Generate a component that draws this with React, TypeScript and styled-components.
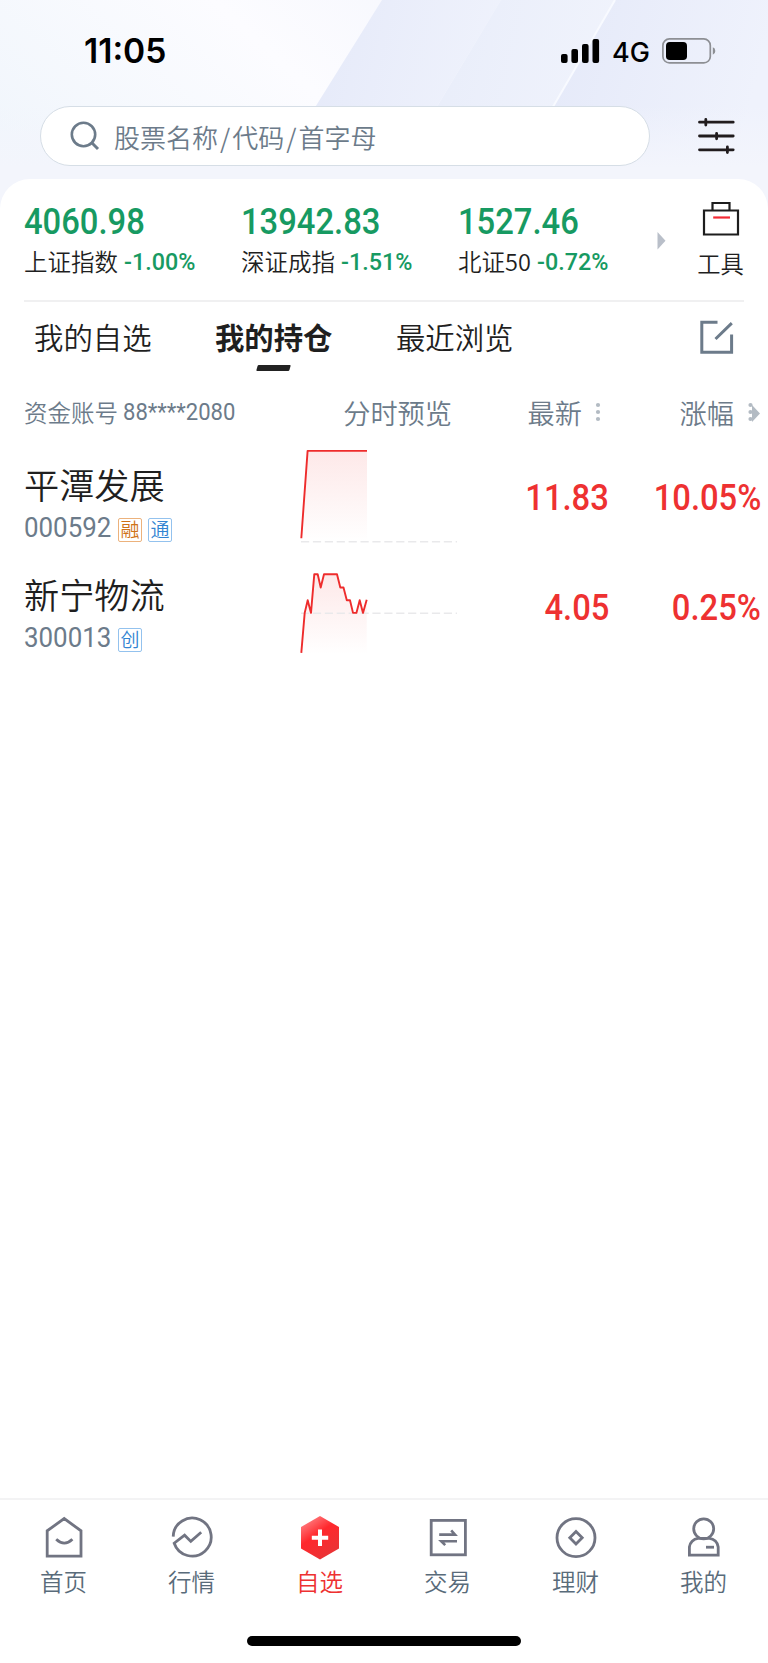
import React from "react";
import styled, { createGlobalStyle } from "styled-components";

const GlobalStyle = createGlobalStyle`
  * { box-sizing: border-box; }
  body { margin: 0; background: #fff; }
`;

const CJK = `"Noto Sans CJK SC", sans-serif`;
const SLATE = "#6c7b8a";
const INK = "#1f1f1f";
const RED = "#ee3131";
const GREEN = "#179a62";

const Screen = styled.div`
  width: 768px;
  height: 1663px;
  display: flex;
  flex-direction: column;
  overflow: hidden;
  background: #fff;
  font-family: ${CJK};
  font-weight: 350;
  color: ${INK};
  white-space: nowrap;
`;

const Header = styled.header`
  position: relative;
  height: 210px;
  flex: none;
  background: #f4f7fd;
`;

const Backdrop = styled.svg`
  position: absolute;
  inset: 0;
`;

const StatusBar = styled.div`
  position: relative;
  height: 106px;
  padding: 0 52px 0 84px;
  display: flex;
  align-items: center;
  justify-content: space-between;
  color: #000;
`;

const Clock = styled.span`
  font: 600 33.6px/40px Inter, sans-serif;
  padding-bottom: 4px;
`;

const StatusRight = styled.div`
  display: flex;
  align-items: center;
  padding-bottom: 4px;
`;

const Network = styled.span`
  font: 450 27px/40px Inter, sans-serif;
  width: 62px;
  padding-left: 12px;
  padding-top: 3px;
`;

const SearchRow = styled.div`
  position: relative;
  display: flex;
  align-items: center;
  justify-content: space-between;
  padding: 0 33px 0 40px;
`;

const SearchBox = styled.div`
  width: 610px;
  height: 60px;
  border: 1.5px solid #d6dee6;
  border-radius: 30px;
  background: #fff;
  display: flex;
  align-items: center;
  padding-left: 28px;
  gap: 13px;
  font-size: 26px;
  line-height: 55px;
  color: ${SLATE};
  i { font-style: normal; margin: 0 2px; }
`;

const Card = styled.main`
  position: relative;
  flex: 1;
  margin-top: -31px;
  border-radius: 30px 30px 0 0;
  background: #fff;
  display: flex;
  flex-direction: column;
`;

const Indices = styled.section`
  height: 123px;
  margin: 0 24px;
  border-bottom: 2px solid #f0f0f1;
  display: flex;
  padding-top: 22px;
`;

const IndexItem = styled.div`
  width: 217px;
`;

const Num = styled.span<{ $size: number; $weight?: number; $stretch?: number; $origin?: string }>`
  display: inline-block;
  font-family: Roboto, ${CJK};
  font-size: ${(p) => p.$size}px;
  font-weight: ${(p) => p.$weight ?? 500};
  transform: scaleX(${(p) => p.$stretch ?? 0.91});
  transform-origin: ${(p) => p.$origin ?? "left"} center;
`;

const IndexValue = styled.div`
  height: 40px;
  line-height: 42px;
  color: ${GREEN};
`;

const IndexLabel = styled.div`
  display: flex;
  align-items: center;
  gap: 6px;
  height: 40px;
  line-height: 40px;
  font-size: 23.5px;
  ${Num} { color: ${GREEN}; padding-top: 2px; }
`;

const MoreArrow = styled.div`
  width: 23px;
  padding-top: 30px;
  margin-left: -18px;
`;

const Tools = styled.div`
  margin-left: auto;
  width: 47px;
  display: flex;
  flex-direction: column;
  align-items: center;
  font-size: 23.3px;
  line-height: 36px;
  gap: 8px;
  svg { flex: none; }
`;

const Tabs = styled.nav`
  height: 82px;
  padding: 0 34px;
  display: flex;
  gap: 63.4px;
`;

const Tab = styled.div<{ $active?: boolean }>`
  height: 69px;
  padding-top: 14px;
  font-size: 29.4px;
  line-height: 40px;
  font-weight: ${(p) => (p.$active ? 700 : 350)};
  display: flex;
  flex-direction: column;
  align-items: center;
  justify-content: space-between;
  &::after {
    content: "";
    display: ${(p) => (p.$active ? "block" : "none")};
    width: 33px;
    height: 6px;
    background: #222;
    transform: skewX(-16deg);
    border-radius: 1px;
  }
`;

const EditIcon = styled.svg`
  margin: 17px 0 0 auto;
`;

const gridColumns = `
  display: grid;
  grid-template-columns: 276px 182px 151px 152px;
`;

const TableHead = styled.div`
  ${gridColumns}
  height: 60px;
  line-height: 56px;
  font-size: 27.2px;
  color: ${SLATE};
`;

const Account = styled.div`
  padding-left: 24px;
  font-size: 23.5px;
  display: flex;
  gap: 5px;
`;

const HeadCell = styled.div<{ $gap?: number; $right?: number }>`
  display: flex;
  justify-content: flex-end;
  align-items: center;
  height: 56px;
  gap: ${(p) => p.$gap ?? 0}px;
  padding-right: ${(p) => p.$right ?? 0}px;
`;

const StockRow = styled.div`
  ${gridColumns}
  height: 110px;
`;

const StockInfo = styled.div`
  padding: 16px 0 0 24px;
`;

const StockName = styled.div`
  font-size: 35.2px;
  line-height: 48px;
`;

const StockCode = styled.div`
  display: flex;
  align-items: center;
  height: 42px;
  color: ${SLATE};
`;

const CodeText = styled.div`
  width: 94px;
  line-height: 42px;
`;

const Tag = styled.span<{ $tone: "orange" | "blue" }>`
  width: 24px;
  height: 24px;
  margin: 1px 6px 0 0;
  border: 1.5px solid ${(p) => (p.$tone === "orange" ? "#ecb27c" : "#93c2ee")};
  border-radius: 2px;
  color: ${(p) => (p.$tone === "orange" ? "#cf7218" : "#3284d2")};
  font-size: 19px;
  line-height: 20px;
  display: flex;
  justify-content: center;
`;

const Quote = styled.div`
  height: 109px;
  line-height: 109px;
  text-align: right;
  color: ${RED};
`;

const ChartCell = styled.div`
  padding-left: 24px;
  svg { display: block; }
`;

const BottomNav = styled.nav`
  height: 165px;
  flex: none;
  border-top: 2px solid #f3f3f4;
  display: flex;
  flex-direction: column;
  align-items: center;
  background: #fff;
`;

const NavItems = styled.div`
  width: 100%;
  height: 136px;
  display: flex;
`;

const NavItem = styled.div<{ $active?: boolean }>`
  flex: 1;
  display: flex;
  flex-direction: column;
  align-items: center;
  padding-top: 14px;
  font-size: 23.5px;
  line-height: 38px;
  color: ${(p) => (p.$active ? RED : "#596b7a")};
  span { margin-left: -1px; }
  svg { flex: none; }
`;

const HomeIndicator = styled.div`
  width: 274px;
  height: 10px;
  border-radius: 5px;
  background: #000;
`;

const Dots = () => (
  <svg width="6" height="22" viewBox="0 0 6 22" fill="#b3bbc3">
    <circle cx="3" cy="4" r="2.1" />
    <circle cx="3" cy="11" r="2.1" />
    <circle cx="3" cy="18" r="2.1" />
  </svg>
);

function Sparkline({ id, points, area, base }: { id: string; points: string; area: string; base: number }) {
  return (
    <svg width="158" height="108" viewBox="300 2.3 158 108" fill="none">
      <defs>
        <linearGradient id={id} x1="0" y1="0" x2="0" y2="1">
          <stop offset="0" stopColor="#ee3131" stopOpacity="0.11" />
          <stop offset="1" stopColor="#ee3131" stopOpacity="0" />
        </linearGradient>
      </defs>
      <path d={area} fill={`url(#${id})`} />
      <path d={`M301 ${base}H457`} stroke="#e9e9eb" strokeWidth="1.6" strokeDasharray="8.2 3.7" />
      <polyline points={points} stroke="#ee2c2c" strokeWidth="1.9" strokeLinejoin="round" />
    </svg>
  );
}

const LINE_A = "301.3,96.5 307.6,9.2 367,9.2";
const LINE_B =
  "301.3,101.2 304.7,61.2 307.7,48.5 311,61.2 314.3,22.5 317.7,22.5 320.7,35.8 324,22.5 337,22.5 340.3,35.8 343.5,35.8 346.8,48.5 350,48.5 353,61.2 356.4,61.2 359.7,48.5 363,61.2 366.7,48";

const stocks = [
  {
    name: "平潭发展", code: "000592", price: "11.83", change: "10.05%",
    tags: [{ text: "融", tone: "orange" as const }, { text: "通", tone: "blue" as const }],
    chart: { id: "fillA", points: LINE_A, area: `M${LINE_A.replace(/ /g, "L")}V100H301.3Z`, base: 100 },
  },
  {
    name: "新宁物流", code: "300013", price: "4.05", change: "0.25%",
    tags: [{ text: "创", tone: "blue" as const }],
    chart: { id: "fillB", points: LINE_B, area: `M${LINE_B.replace(/ /g, "L")}V103H301.3Z`, base: 61.5 },
  },
];

const indices = [
  { value: "4060.98", label: "上证指数", change: "-1.00%" },
  { value: "13942.83", label: "深证成指", change: "-1.51%" },
  { value: "1527.46", label: "北证50", change: "-0.72%" },
];

const NavSvg = ({ children }: { children: React.ReactNode }) => (
  <svg width="48" height="48" viewBox="0 0 48 48" fill="none" stroke="#717482" strokeWidth="2.8">
    {children}
  </svg>
);

const navItems = [
  {
    label: "首页",
    icon: (
      <NavSvg>
        <path d="M7.2 42.2V16.8L24.2 4.6 41 16.8V42.2Z" />
        <path d="M16.2 25.3Q24.3 33 32.4 25.3" />
      </NavSvg>
    ),
  },
  {
    label: "行情",
    icon: (
      <NavSvg>
        <path d="M5.2 22.6A19 19 0 1 1 6.2 29.2L16.6 21.2 22.8 27.4 33.2 18.2" />
      </NavSvg>
    ),
  },
  {
    label: "自选",
    active: true,
    icon: (
      <svg width="48" height="48" viewBox="0 0 48 48">
        <defs>
          <linearGradient id="hex" x1="0.1" y1="0" x2="0.7" y2="1">
            <stop offset="0" stopColor="#ff9092" />
            <stop offset="0.45" stopColor="#ff282d" />
            <stop offset="1" stopColor="#e83436" />
          </linearGradient>
        </defs>
        <path d="M24 2L43 13V34.5L24 45.6 5 34.5V13Z" fill="url(#hex)" />
        <path d="M24 15.6V32M15.8 23.8H32.2" stroke="#fff" strokeWidth="4" />
      </svg>
    ),
  },
  {
    label: "交易",
    icon: (
      <NavSvg>
        <rect x="7.2" y="6.4" width="34.2" height="34.4" />
        <path d="M15.2 20.6H31L27.2 16.4M33 27.2H17.2L21.2 31.2" strokeWidth="2.6" />
      </NavSvg>
    ),
  },
  {
    label: "理财",
    icon: (
      <NavSvg>
        <circle cx="24" cy="23.7" r="19" />
        <path d="M24 17.5L30.2 23.7 24 29.9 17.8 23.7Z" />
      </NavSvg>
    ),
  },
  {
    label: "我的",
    icon: (
      <NavSvg>
        <circle cx="23.7" cy="14.8" r="10" />
        <path d="M9.4 41.2V33A9.6 9.6 0 0 1 18 24.4H29.4A9.6 9.6 0 0 1 38.2 33V41.2Z" />
        <path d="M26 33.2H34" />
      </NavSvg>
    ),
  },
];

export default function App() {
  return (
    <Screen>
      <GlobalStyle />
      <Header>
        <Backdrop width="768" height="210" viewBox="0 0 768 210">
          <defs>
            <linearGradient id="sky" x1="0" y1="0.6" x2="1" y2="0.3">
              <stop offset="0" stopColor="#f1f6fc" />
              <stop offset="0.42" stopColor="#fcfcff" />
              <stop offset="1" stopColor="#f0f2fc" />
            </linearGradient>
            <linearGradient id="beam" x1="0" y1="0" x2="1" y2="0.2">
              <stop offset="0" stopColor="#e2e7f8" />
              <stop offset="1" stopColor="#eff2fc" />
            </linearGradient>
            <linearGradient id="beamSoft" x1="0" y1="0" x2="1" y2="0.2">
              <stop offset="0" stopColor="#e6ebf9" />
              <stop offset="1" stopColor="#f0f3fc" />
            </linearGradient>
            <linearGradient id="fade" x1="0" y1="0" x2="0" y2="1">
              <stop offset="0.5" stopColor="#f3f5fd" stopOpacity="0" />
              <stop offset="0.8" stopColor="#f3f5fc" />
            </linearGradient>
          </defs>
          <rect width="768" height="210" fill="url(#sky)" />
          <path d="M382 0H501L375 210H251Z" fill="url(#beam)" />
          <path d="M501 0H615L493 210H375Z" fill="url(#beamSoft)" />
          <path d="M615 0H768V210H493Z" fill="url(#beam)" />
          <path d="M615 0L493 210" stroke="#f8faff" strokeWidth="2" />
          <rect width="768" height="210" fill="url(#fade)" />
        </Backdrop>
        <StatusBar>
          <Clock>11:05</Clock>
          <StatusRight>
            <svg width="39" height="26" viewBox="0 0 39 26">
              <rect x="0" y="16" width="6.6" height="9" rx="2" />
              <rect x="10.4" y="11" width="6.6" height="14" rx="2" />
              <rect x="21" y="6" width="6.6" height="19" rx="2" />
              <rect x="31.5" y="1" width="6.6" height="24" rx="2" />
            </svg>
            <Network>4G</Network>
            <svg width="54" height="26" viewBox="0 0 54 26">
              <rect x="0.9" y="0.9" width="47.4" height="24" rx="6.5" fill="none" stroke="#8d8f94" strokeWidth="1.7" />
              <rect x="4" y="4" width="21" height="18" rx="3.8" />
              <path d="M50.8 9.2Q53.3 10 53.3 13T50.8 16.8Z" fill="#8d8f94" />
            </svg>
          </StatusRight>
        </StatusBar>
        <SearchRow>
          <SearchBox>
            <svg width="32" height="32" viewBox="0 0 32 32" fill="none" stroke={SLATE} strokeWidth="2.6">
              <circle cx="14.5" cy="14.5" r="11.7" />
              <path d="M22.8 22.8L29 29" strokeWidth="3" />
            </svg>
            <span>股票名称<i>/</i>代码<i>/</i>首字母</span>
          </SearchBox>
          <svg width="37" height="38" viewBox="0 0 37 38" stroke="#211c1e" strokeWidth="2.8" strokeLinecap="round">
            <path d="M1.5 5.2H35.2M1.5 19H35.2M1.5 32.8H35.2M7.8 2.5V8M18.6 16.3V21.8M29.4 30V35.6" />
          </svg>
        </SearchRow>
      </Header>

      <Card>
        <Indices>
          {indices.map((item) => (
            <IndexItem key={item.label}>
              <IndexValue><Num $size={36}>{item.value}</Num></IndexValue>
              <IndexLabel>
                {item.label}
                <Num $size={24.8} $weight={500} $stretch={0.94}>{item.change}</Num>
              </IndexLabel>
            </IndexItem>
          ))}
          <MoreArrow>
            <svg width="9" height="18" viewBox="0 0 9 18"><path d="M0.5 0L8.5 8.8 0.5 17.6Z" fill="#b9bfc9" /></svg>
          </MoreArrow>
          <Tools>
            <svg width="38" height="36" viewBox="0 0 38 36" fill="none" stroke="#1d1d1d" strokeWidth="2.2">
              <path d="M2 9.5H36V33.5H2Z" />
              <path d="M10.5 9.5V2H27.5V9.5" />
              <path d="M11.2 16.5H28" stroke="#f32a35" />
            </svg>
            工具
          </Tools>
        </Indices>

        <Tabs>
          <Tab>我的自选</Tab>
          <Tab $active>我的持仓</Tab>
          <Tab>最近浏览</Tab>
          <EditIcon width="34" height="36" viewBox="0 0 34 36" fill="none" stroke={SLATE} strokeWidth="3">
            <path d="M17.5 3.2H1.8V33.2H31.6V15.5M15.5 20L31.8 4.2" />
          </EditIcon>
        </Tabs>

        <TableHead>
          <Account>
            资金账号
            <Num $size={24.5} $weight={400} $stretch={0.9}>88****2080</Num>
          </Account>
          <HeadCell $right={6}>分时预览</HeadCell>
          <HeadCell $gap={13} $right={8}>最新<Dots /></HeadCell>
          <HeadCell $gap={14} $right={1}>
            涨幅
            <svg width="12" height="22" viewBox="0 0 12 22" fill="#b3bbc3">
              <circle cx="2.5" cy="4" r="2.1" />
              <circle cx="2.5" cy="11" r="2.1" />
              <circle cx="2.5" cy="18" r="2.1" />
              <path d="M4 4L12 12.5 4 21Z" />
            </svg>
          </HeadCell>
        </TableHead>

        {stocks.map((stock) => (
          <StockRow key={stock.code}>
            <StockInfo>
              <StockName>{stock.name}</StockName>
              <StockCode>
                <CodeText><Num $size={28} $weight={400} $stretch={0.925}>{stock.code}</Num></CodeText>
                {stock.tags.map((tag) => <Tag key={tag.text} $tone={tag.tone}>{tag.text}</Tag>)}
              </StockCode>
            </StockInfo>
            <ChartCell><Sparkline {...stock.chart} /></ChartCell>
            <Quote><Num $size={36} $origin="right">{stock.price}</Num></Quote>
            <Quote><Num $size={36} $origin="right">{stock.change}</Num></Quote>
          </StockRow>
        ))}
      </Card>

      <BottomNav>
        <NavItems>
          {navItems.map((item) => (
            <NavItem key={item.label} $active={item.active}>
              {item.icon}
              <span>{item.label}</span>
            </NavItem>
          ))}
        </NavItems>
        <HomeIndicator />
      </BottomNav>
    </Screen>
  );
}
